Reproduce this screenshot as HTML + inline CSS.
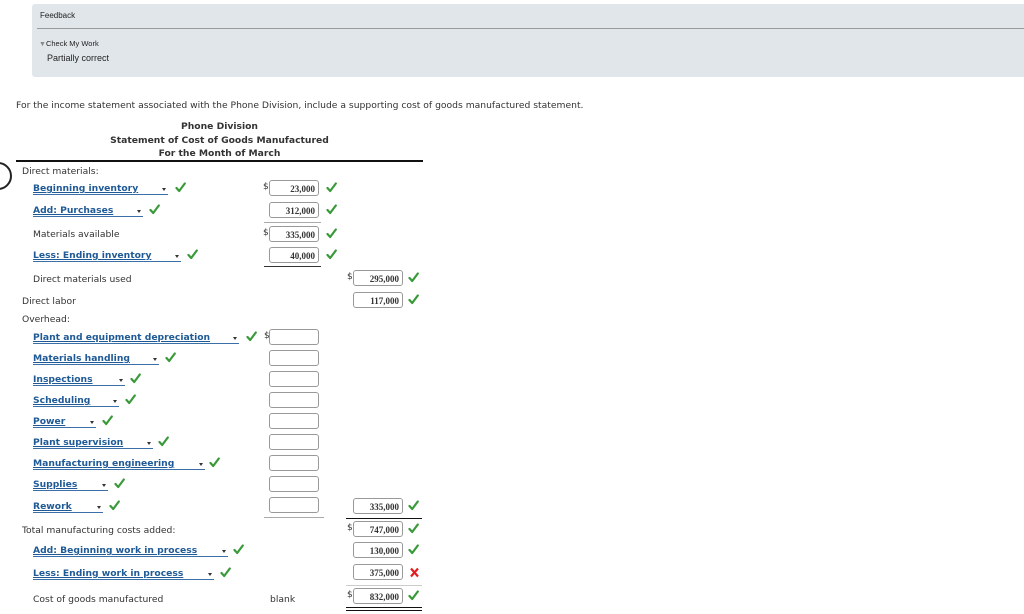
<!DOCTYPE html>
<html><head><style>
body{margin:0;width:1024px;height:614px;background:#fff;position:relative;overflow:hidden;font-family:"DejaVu Sans",Verdana,sans-serif;font-size:9.2px;color:#333}
.a{position:absolute;white-space:nowrap}
.fb{position:absolute;left:32px;top:4px;width:1000px;height:73px;background:#e1e6ea;border-radius:3px;font-family:"Liberation Sans",Arial,sans-serif;color:#222}
.dd{position:absolute;height:13px;border-bottom:1.5px solid #3a6fa8;color:#1f5a96;font-weight:bold;text-decoration:underline;font-size:9.2px;line-height:15px}
.dd:after{content:"";position:absolute;right:2px;top:7px;border-left:2.5px solid transparent;border-right:2.5px solid transparent;border-top:3px solid #333}
.ck{position:absolute;width:11px;height:11px}
.in{position:absolute;width:50px;height:16px;border:1px solid #999;border-radius:3px;font-family:"Liberation Serif",serif;font-weight:bold;font-size:9px;text-align:right;line-height:16px;padding-right:3px;box-sizing:border-box;color:#333}
.d{position:absolute;font-size:9px;color:#333}
.ln{position:absolute;height:1px;background:#aaa}
</style></head><body>
<svg width="0" height="0" style="position:absolute"><defs><symbol id="c" viewBox="0 0 11 11"><path d="M1.5 6 L4.2 9 L9.8 1.5" fill="none" stroke="#3a9a3a" stroke-width="2.2" stroke-linecap="round" stroke-linejoin="round"/></symbol></defs></svg>
<div class="fb">
<div class="a" style="left:8px;top:7px;font-size:8px">Feedback</div>
<div style="position:absolute;left:5px;right:0;top:24px;height:1px;background:#999"></div>
<div class="a" style="left:7px;top:35px;font-size:7.5px"><span style="color:#888;font-size:7px">▼</span>Check My Work</div>
<div class="a" style="left:15px;top:49px;font-size:9px">Partially correct</div>
</div>
<div class="a" style="left:16px;top:100px">For the income statement associated with the Phone Division, include a supporting cost of goods manufactured statement.</div>
<div class="a" style="left:16px;top:120px;width:407px;text-align:center;font-weight:bold;line-height:13.5px">Phone Division<br>Statement of Cost of Goods Manufactured<br>For the Month of March</div>
<div style="position:absolute;left:16px;top:160px;width:407px;height:2px;background:#111"></div>
<div style="position:absolute;left:-16px;top:162px;width:24px;height:24px;border:2px solid #222;border-radius:50%"></div>

<div class="a" style="left:22px;top:166px">Direct materials:</div>
<div class="dd" style="left:33px;top:181px;width:135px">Beginning inventory</div><svg class="ck" style="left:175px;top:182px"><use href="#c"/></svg>
<div class="dd" style="left:33px;top:203px;width:110px">Add: Purchases</div><svg class="ck" style="left:149px;top:204px"><use href="#c"/></svg>
<div class="a" style="left:33px;top:229px">Materials available</div>
<div class="dd" style="left:33px;top:248px;width:148px">Less: Ending inventory</div><svg class="ck" style="left:187px;top:249px"><use href="#c"/></svg>
<div class="a" style="left:33px;top:274px">Direct materials used</div>
<div class="a" style="left:22px;top:296px">Direct labor</div>
<div class="a" style="left:22px;top:314px">Overhead:</div>
<div class="dd" style="left:33px;top:330px;width:206px">Plant and equipment depreciation</div><svg class="ck" style="left:246px;top:331px"><use href="#c"/></svg>
<div class="dd" style="left:33px;top:351px;width:126px">Materials handling</div><svg class="ck" style="left:165px;top:352px"><use href="#c"/></svg>
<div class="dd" style="left:33px;top:372px;width:92px">Inspections</div><svg class="ck" style="left:130px;top:373px"><use href="#c"/></svg>
<div class="dd" style="left:33px;top:393px;width:86px">Scheduling</div><svg class="ck" style="left:125px;top:394px"><use href="#c"/></svg>
<div class="dd" style="left:33px;top:414px;width:63px">Power</div><svg class="ck" style="left:102px;top:415px"><use href="#c"/></svg>
<div class="dd" style="left:33px;top:435px;width:120px">Plant supervision</div><svg class="ck" style="left:158px;top:436px"><use href="#c"/></svg>
<div class="dd" style="left:33px;top:456px;width:172px">Manufacturing engineering</div><svg class="ck" style="left:209px;top:457px"><use href="#c"/></svg>
<div class="dd" style="left:33px;top:477px;width:75px">Supplies</div><svg class="ck" style="left:114px;top:478px"><use href="#c"/></svg>
<div class="dd" style="left:33px;top:499px;width:70px">Rework</div><svg class="ck" style="left:109px;top:500px"><use href="#c"/></svg>
<div class="a" style="left:22px;top:525px">Total manufacturing costs added:</div>
<div class="dd" style="left:33px;top:543px;width:195px">Add: Beginning work in process</div><svg class="ck" style="left:233px;top:544px"><use href="#c"/></svg>
<div class="dd" style="left:33px;top:566px;width:181px">Less: Ending work in process</div><svg class="ck" style="left:220px;top:567px"><use href="#c"/></svg>
<div class="a" style="left:33px;top:594px">Cost of goods manufactured</div>
<div class="a" style="left:270px;top:594px">blank</div>

<div class="d" style="left:263px;top:182px">$</div><div class="in" style="left:269px;top:180px">23,000</div><svg class="ck" style="left:326px;top:182px"><use href="#c"/></svg>
<div class="in" style="left:269px;top:202px">312,000</div><svg class="ck" style="left:326px;top:204px"><use href="#c"/></svg>
<div class="ln" style="left:264px;top:222px;width:57px"></div>
<div class="d" style="left:263px;top:228px">$</div><div class="in" style="left:269px;top:226px">335,000</div><svg class="ck" style="left:326px;top:228px"><use href="#c"/></svg>
<div class="in" style="left:269px;top:247px">40,000</div><svg class="ck" style="left:326px;top:249px"><use href="#c"/></svg>
<div style="position:absolute;left:264px;top:266px;width:57px;height:1px;background:#333"></div>
<div class="d" style="left:264px;top:331px">$</div>
<div class="in" style="left:269px;top:329px"></div>
<div class="in" style="left:269px;top:350px"></div>
<div class="in" style="left:269px;top:371px"></div>
<div class="in" style="left:269px;top:392px"></div>
<div class="in" style="left:269px;top:413px"></div>
<div class="in" style="left:269px;top:434px"></div>
<div class="in" style="left:269px;top:455px"></div>
<div class="in" style="left:269px;top:476px"></div>
<div class="in" style="left:269px;top:497px"></div>
<div class="ln" style="left:264px;top:517px;width:60px"></div>

<div class="d" style="left:347px;top:272px">$</div><div class="in" style="left:353px;top:270px">295,000</div><svg class="ck" style="left:408px;top:272px"><use href="#c"/></svg>
<div class="in" style="left:353px;top:292px">117,000</div><svg class="ck" style="left:408px;top:294px"><use href="#c"/></svg>
<div class="in" style="left:353px;top:498px">335,000</div><svg class="ck" style="left:408px;top:500px"><use href="#c"/></svg>
<div style="position:absolute;left:346px;top:518px;width:76px;height:1px;background:#111"></div>
<div class="d" style="left:347px;top:523px">$</div><div class="in" style="left:353px;top:521px">747,000</div><svg class="ck" style="left:408px;top:523px"><use href="#c"/></svg>
<div class="in" style="left:353px;top:542px">130,000</div><svg class="ck" style="left:408px;top:544px"><use href="#c"/></svg>
<div class="in" style="left:353px;top:564px">375,000</div>
<svg class="ck" style="left:409px;top:567px" viewBox="0 0 11 11"><path d="M2 1.5 L9 9.5 M9 1.5 L2 9.5" stroke="#e02020" stroke-width="2.2"/></svg>
<div class="ln" style="left:346px;top:585px;width:76px;background:#ccc"></div>
<div class="d" style="left:347px;top:590px">$</div><div class="in" style="left:353px;top:588px">832,000</div><svg class="ck" style="left:408px;top:590px"><use href="#c"/></svg>
<div style="position:absolute;left:346px;top:607px;width:76px;height:1px;background:#111"></div>
<div style="position:absolute;left:346px;top:610px;width:76px;height:1px;background:#111"></div>
</body></html>
